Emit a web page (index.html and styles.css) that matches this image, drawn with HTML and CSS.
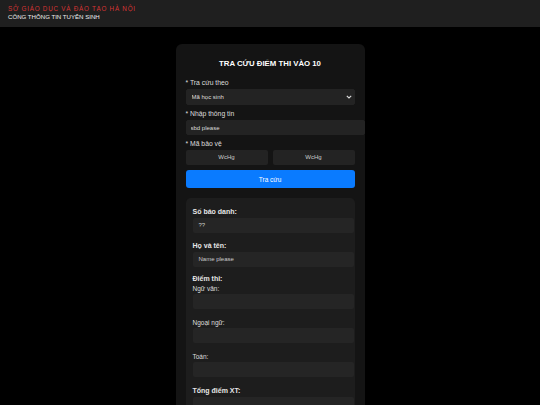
FILE: index.html
```html
<!DOCTYPE html>
<html lang="vi">
<head>
  <meta charset="UTF-8">
  <meta name="viewport" content="width=device-width, initial-scale=1.0">
  <title>Tra cứu điểm thi vào 10</title>
  <link rel="stylesheet" href="styles.css">
</head>
<body>
  <header class="topbar">
    <div class="org">SỞ GIÁO DỤC VÀ ĐÀO TẠO HÀ NỘI</div>
    <div class="portal">CỔNG THÔNG TIN TUYỂN SINH</div>
  </header>

  <div class="container">
    <h1>TRA CỨU ĐIỂM THI VÀO 10</h1>
    <form id="lookup-form">
      <div class="form-group">
        <label for="type">* Tra cứu theo</label>
        <div class="select-wrap">
          <select id="type">
            <option>Mã học sinh</option>
            <option>Số báo danh</option>
          </select>
          <svg class="chevron" width="6" height="4" viewBox="0 0 6 4"><path d="M0.8 0.8 L3 3 L5.2 0.8" fill="none" stroke="#ddd" stroke-width="1.1"/></svg>
        </div>
      </div>
      <div class="form-group">
        <label for="info">* Nhập thông tin</label>
        <input type="text" id="info" value="sbd please">
      </div>
      <div class="form-group">
        <label>* Mã bảo vệ</label>
        <div class="captcha">
          <div class="captcha-box">WcHg</div>
          <div class="captcha-box">WcHg</div>
        </div>
      </div>
      <button type="submit">Tra cứu</button>
    </form>

    <div class="result">
      <div class="field">
        <div class="title">Số báo danh:</div>
        <div class="value">??</div>
      </div>
      <div class="field">
        <div class="title">Họ và tên:</div>
        <div class="value">Name please</div>
      </div>
      <div class="field">
        <div class="title">Điểm thi:</div>
        <div class="sub">Ngữ văn:</div>
        <div class="value"></div>
      </div>
      <div class="field">
        <div class="sub">Ngoại ngữ:</div>
        <div class="value"></div>
      </div>
      <div class="field">
        <div class="sub">Toán:</div>
        <div class="value"></div>
      </div>
      <div class="field">
        <div class="title">Tổng điểm XT:</div>
        <div class="value"></div>
      </div>
    </div>
  </div>
</body>
</html>
```

FILE: styles.css
```css
body {
  font-family: "Liberation Sans", Arial, sans-serif;
  margin: 0;
  padding: 0;
  background-color: #000;
  color: #e6e6e6;
}
.topbar {
  background: #1f1f1f;
  height: 27px;
  padding: 5px 8px 0;
  box-sizing: border-box;
  line-height: 7.5px;
}
.org {
  color: #d63434;
  font-size: 6.3px;
  letter-spacing: 0.75px;
}
.portal {
  color: #eee;
  font-size: 6.1px;
}
.container {
  width: 169px;
  margin: 17px auto 0;
  background: #141414;
  padding: 10px 10px 20px;
  border-radius: 6px;
}
h1 {
  text-align: center;
  color: #fff;
  font-size: 7.8px;
  line-height: 10px;
  margin: 5px 0 10px;
}
.form-group {
  margin-bottom: 5px;
}
label {
  display: block;
  font-size: 6.8px;
  line-height: 8px;
  margin-bottom: 2px;
  color: #ddd;
}
.select-wrap {
  position: relative;
}
.chevron {
  position: absolute;
  right: 3px;
  top: 6px;
  pointer-events: none;
}
input, select {
  font-family: inherit;
  font-size: 6px;
  color: #ddd;
  background: #232323;
  border: 1px solid #232323;
  border-radius: 2px;
  margin: 0;
  display: block;
}
select {
  -webkit-appearance: none;
  appearance: none;
  width: 100%;
  height: 16px;
  padding: 0 5px;
}
input {
  width: 100%;
  padding: 0 4px;
  box-sizing: content-box;
  height: 13px;
}
.captcha {
  display: flex;
  gap: 5px;
}
.captcha-box {
  flex: 1;
  height: 15px;
  line-height: 15px;
  text-align: center;
  background: #232323;
  border-radius: 2px;
  font-size: 6px;
  color: #ccc;
}
button {
  display: block;
  width: 100%;
  height: 18px;
  background-color: #0a7bff;
  color: #fff;
  border: none;
  border-radius: 3px;
  font-family: inherit;
  font-size: 6.5px;
  margin-top: 5px;
}
.result {
  margin-top: 10px;
  background: #1d1d1d;
  border-radius: 5px;
  padding: 10px 1px 7px 7px;
}
.field {
  margin-bottom: 10px;
}
.field:nth-child(1) {
  margin-bottom: 9px;
}
.field:nth-child(2) {
  margin-bottom: 8px;
}
.title {
  font-size: 7px;
  line-height: 8px;
  font-weight: bold;
  margin-bottom: 2px;
}
.sub {
  font-size: 6.5px;
  line-height: 8px;
  margin-bottom: 1px;
  color: #ddd;
}
.title + .sub {
  margin-top: 1px;
}
.value {
  height: 15px;
  line-height: 15px;
  background: #252525;
  border-radius: 2px;
  padding: 0 6px;
  font-size: 6px;
  color: #ccc;
}
```
